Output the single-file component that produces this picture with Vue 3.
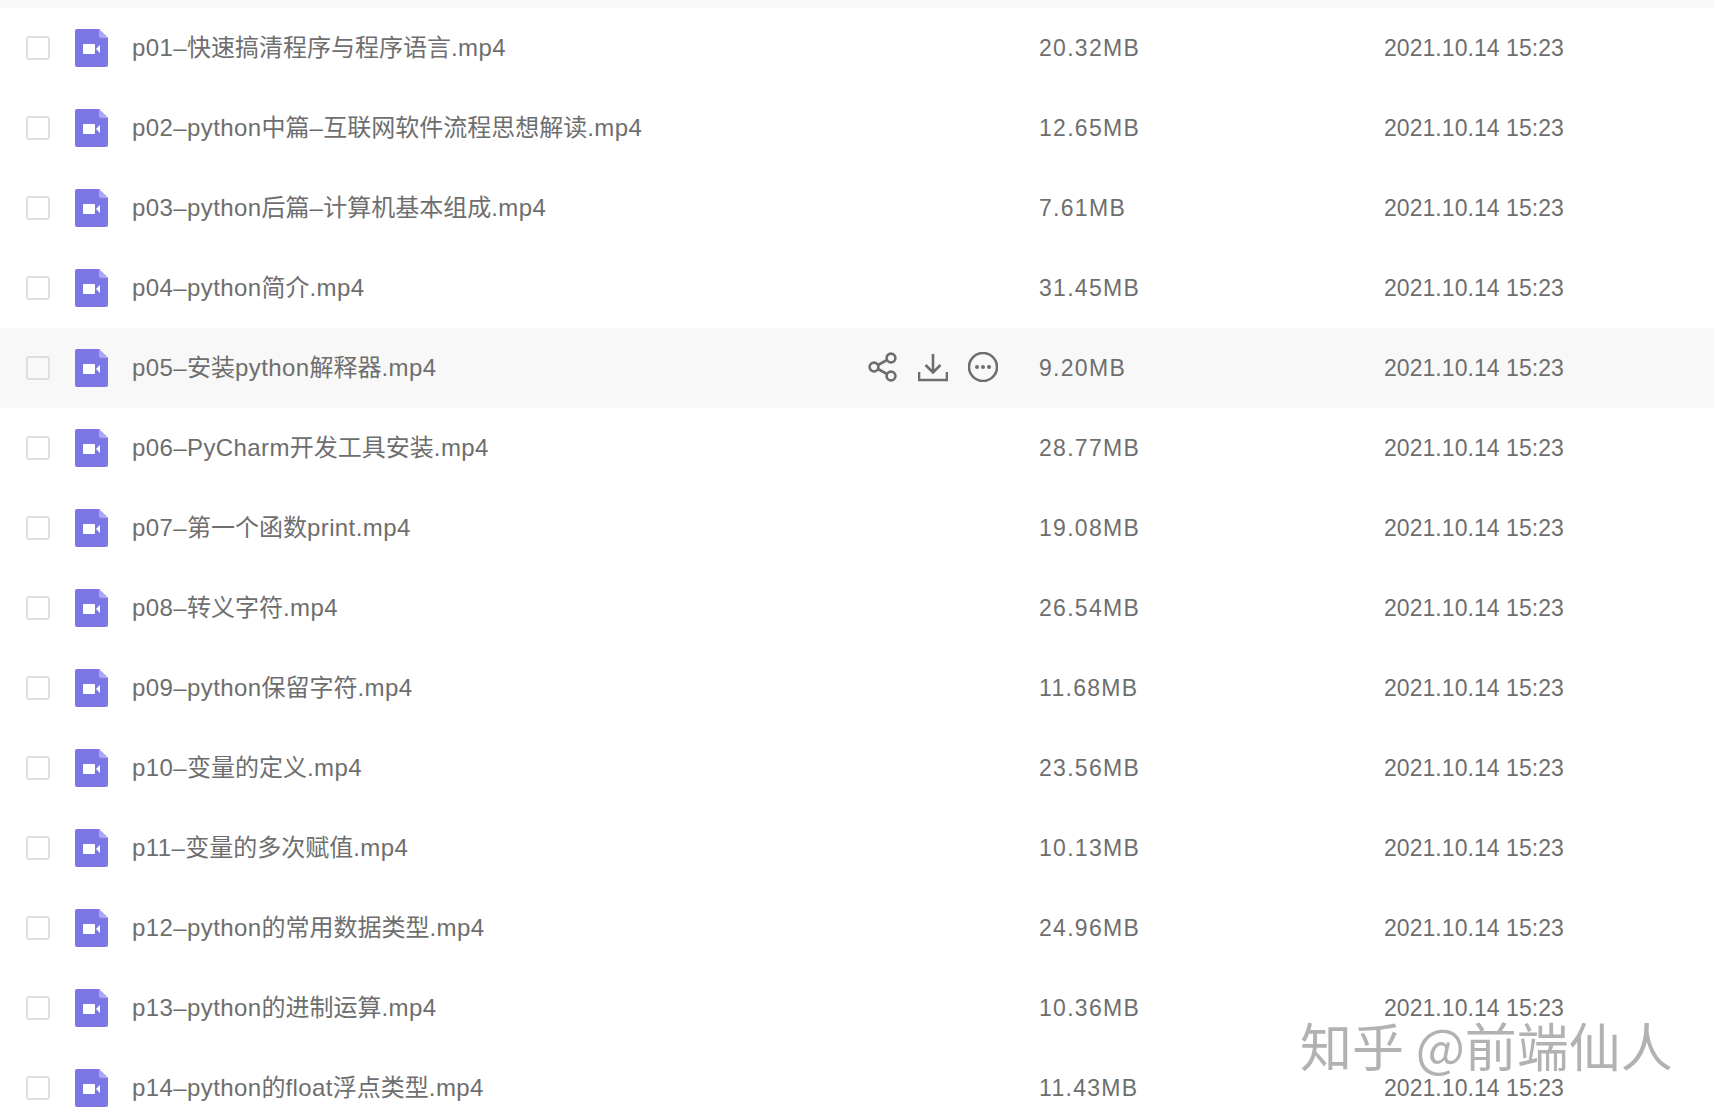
<template>
  <div class="page">
    <div class="top-strip"></div>
    <div v-for="file in files" :key="file.name" class="row" :class="{ hover: file.hover }">
      <span class="check"></span>
      <svg class="file-icon" viewBox="0 0 33 38">
        <path d="M2 0H24L33 9V36a2 2 0 0 1-2 2H2a2 2 0 0 1-2-2V2a2 2 0 0 1 2-2Z" fill="#7b78e5" />
        <path d="M24 0L33 9H26a2 2 0 0 1-2-2Z" fill="#a9a7ef" />
        <rect x="8" y="15" width="12" height="10" rx="1" fill="#fff" />
        <path d="M21 20L25 16V24Z" fill="#fff" />
      </svg>
      <div class="name-cell">
        <span class="name"><span
          v-for="(part, i) in splitName(file.name)"
          :key="i"
          :class="isCjk(part) ? 'cjk' : 'latin'"
        >{{ part }}</span></span>
        <div v-if="file.hover" class="actions">
          <svg viewBox="0 0 30 30">
            <circle cx="6" cy="15" r="4.400" />
            <circle cx="23" cy="6" r="4.400" />
            <circle cx="23" cy="24" r="4.400" />
            <path d="M10 13L19 8M10 17L19 22" />
          </svg>
          <svg viewBox="0 0 30 30">
            <path d="M15 2V20M7.500 13L15 20.500L22.500 13" />
            <path d="M1 20V28H29V20" />
          </svg>
          <svg viewBox="0 0 30 30">
            <circle cx="15" cy="15" r="14" />
            <circle class="dot" cx="9" cy="15" r="2" />
            <circle class="dot" cx="15" cy="15" r="2" />
            <circle class="dot" cx="21" cy="15" r="2" />
          </svg>
        </div>
      </div>
      <span class="size">{{ file.size }}</span>
      <span class="time">2021.10.14 15:23</span>
    </div>
    <div class="watermark">知乎 @前端仙人</div>
  </div>
</template>

<script setup>
const files = [
  { name: "p01–快速搞清程序与程序语言.mp4", size: "20.32MB" },
  { name: "p02–python中篇–互联网软件流程思想解读.mp4", size: "12.65MB" },
  { name: "p03–python后篇–计算机基本组成.mp4", size: "7.61MB" },
  { name: "p04–python简介.mp4", size: "31.45MB" },
  { name: "p05–安装python解释器.mp4", size: "9.20MB", hover: true },
  { name: "p06–PyCharm开发工具安装.mp4", size: "28.77MB" },
  { name: "p07–第一个函数print.mp4", size: "19.08MB" },
  { name: "p08–转义字符.mp4", size: "26.54MB" },
  { name: "p09–python保留字符.mp4", size: "11.68MB" },
  { name: "p10–变量的定义.mp4", size: "23.56MB" },
  { name: "p11–变量的多次赋值.mp4", size: "10.13MB" },
  { name: "p12–python的常用数据类型.mp4", size: "24.96MB" },
  { name: "p13–python的进制运算.mp4", size: "10.36MB" },
  { name: "p14–python的float浮点类型.mp4", size: "11.43MB" },
];

// latin and chinese runs need different spacing to get the reference widths
const splitName = (name) => name.match(/[\u4e00-\u9fff]+|[^\u4e00-\u9fff]+/g);
const isCjk = (part) => /[\u4e00-\u9fff]/.test(part);
</script>

<style>
html,
body {
  background: #fff;
  overflow: hidden;
}
</style>

<style scoped>
.page {
  position: relative;
  width: 1714px;
  height: 1116px;
  overflow: hidden;
  background: #fff;
  font-family: "Liberation Sans", "Noto Sans CJK SC", sans-serif;
  font-size: 23px;
  color: #6e6e6e;
}

.top-strip {
  height: 8px;
  background: #f9f9f9;
}

.row {
  display: flex;
  align-items: center;
  height: 80px;
  padding-left: 26px;
}

.row.hover {
  background: #f8f8f8;
}

.check {
  width: 24px;
  height: 24px;
  box-sizing: border-box;
  border: 2px solid #dfdfdf;
  border-radius: 3px;
  background: #fff;
  flex: none;
}

.hover .check {
  background: #f8f8f8;
}

.file-icon {
  width: 33px;
  height: 38px;
  margin-left: 25px;
  flex: none;
}

.name-cell {
  display: flex;
  align-items: center;
  justify-content: space-between;
  width: 907px;
  margin-left: 24px;
  padding-right: 41px;
  box-sizing: border-box;
  flex: none;
}

.name {
  margin-top: -5px;
  font-size: 24px;
}

.latin {
  letter-spacing: 0.400px;
}

.actions {
  display: flex;
  gap: 20px;
  margin-top: -2px;
}

.actions svg {
  width: 30px;
  height: 30px;
  fill: none;
  stroke: #6e6e6e;
  stroke-width: 2.600;
}

.actions .dot {
  fill: #6e6e6e;
  stroke: none;
}

.size {
  width: 345px;
  flex: none;
  letter-spacing: 1.300px;
  padding-top: 1px;
}

.time {
  padding-top: 1px;
  letter-spacing: 0.050px;
}

.watermark {
  position: absolute;
  left: 1300px;
  top: 1008px;
  font-family: "Noto Sans CJK SC", sans-serif;
  font-size: 52px;
  line-height: 74px;
  color: #b2b2b2;
  white-space: nowrap;
  text-shadow: 0 0 3px #fff, 2px 2px 2px #fff, -2px -2px 2px #fff;
}
</style>
